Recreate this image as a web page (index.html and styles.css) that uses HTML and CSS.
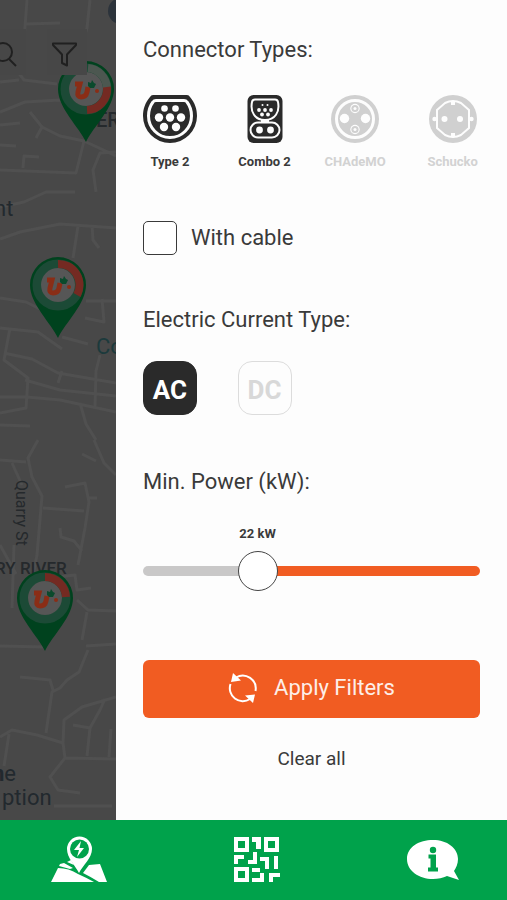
FILE: index.html
```html
<!DOCTYPE html>
<html lang="en">
<head>
<meta charset="utf-8">
<meta name="viewport" content="width=device-width, initial-scale=1">
<title>Charging map filters</title>
<link rel="stylesheet" href="styles.css">
</head>
<body>
<main class="screen">
  <section class="map" aria-label="Map">
    <svg class="map-canvas" viewBox="0 0 116 820" preserveAspectRatio="xMinYMin slice">
      <defs>
        <g id="pin">
          <path class="pin-body" d="M0 53C-7 38-28 19-28 0a28 28 0 0 1 56 0C28 19 7 38 0 53z"/>
          <circle class="pin-ring" r="21"/>
          <circle class="pin-face" r="17"/>
          <path class="pin-u" d="M-11-5H-6L-8 3q-1 5 3 5 5 0 6-5l1-5"/>
          <path class="pin-leaf" d="M2-3 2-7 5-6 6-9 8-6 10-5 8-1 4-1z"/>
          <circle class="pin-dot" cx="11" cy="2" r="2"/>
        </g>
      </defs>
      <g class="roads">
        <path d="M27 0 24 40 18 72 24 80 57 84M25 24 60 23M90 0 87 28 80 52M0 112 25 102 60 100 78 110M0 82 19 80M0 125 20 123M0 145 16 146M30 112 42 127 60 136 84 141 116 156M42 127 36 138M84 141 76 173 0 170M23 168 24 156 39 157M116 152 100 153 93 170 96 192M0 207 24 202 46 192 75 192"/>
        <path d="M0 239 20 232 60 224 116 228M78 226 73 258M92 225 93 240 99 248M0 298 26 302 44 311M0 328 38 332 62 349M10 328 4 360 28 378 26 408 0 413M4 353 32 359 58 373 116 383M62 371 58 383M62 337 88 344M100 355 96 371 95 407M25 380 60 390 116 396M0 397 27 397 60 400 116 412M80 403 86 424 96 440M102 299 104 322 85 318M86 301 116 301M0 425 30 426"/>
        <path d="M38 440 28 458 32 477 42 496 37 555 30 590M0 460 26 462M12 463 22 485M43 508 84 511M116 475 104 463 94 440M82 454 96 461M65 487 85 483 89 502 85 528 78 565M87 498 97 498M60 528 61 537 74 541 82 551M0 545 16 574M14 545 12 608M58 577 75 575 77 590 91 588M77 600 88 610 116 611M87 612 82 640M0 646 45 647"/>
        <path d="M88 650 79 672 67 680 60 688 52 692 46 733M20 677 50 680 53 690M0 737 12 730 37 735 63 743 64 720 82 707 116 697M73 725 90 728 100 710 105 699M90 728 87 756M111 729 109 757M63 743 65 758 116 759M65 758 50 777 58 790 80 793M54 806 112 806M9 734 4 766M86 646 116 644"/>
      </g>
      <circle class="place" cx="121" cy="11" r="13"/>
      <g class="labels">
        <text class="district" x="96" y="127">ER</text>
        <text class="town" x="-6" y="216">nt</text>
        <text class="park" x="96" y="354">Co</text>
        <text class="street" transform="translate(16 480) rotate(90)">Quarry St</text>
        <text class="suburb" x="-5" y="574">RY RIVER</text>
        <text class="town" x="-8" y="781"><tspan class="town-strong">n</tspan>e</text>
        <text class="town" x="2" y="805">ption</text>
      </g>
      <use href="#pin" x="86" y="89"/>
      <path class="pin-arc pin-arc-done" d="M88 68A21 21 0 0 1 107 88"/>
      <path class="pin-arc" d="M107 87A21 21 0 0 1 87 110"/>
      <use href="#pin" x="58" y="285"/>
      <path class="pin-arc" d="M58 264A21 21 0 0 1 77 295"/>
      <use href="#pin" x="45" y="598"/>
      <path class="pin-arc" d="M45 577A21 21 0 0 1 66 597"/>
    </svg>
    <div class="map-tools">
      <button class="tool" type="button" aria-label="Search">
        <svg width="40" height="40" viewBox="0 0 40 40"><circle cx="17" cy="20" r="9"/><path d="M23 27 30 34"/></svg>
      </button>
      <button class="tool" type="button" aria-label="Filter">
        <svg width="40" height="40" viewBox="0 0 40 40"><path d="M6 11.500H29V13L20 22.500V33.500L15 31V22.500L6 13z"/></svg>
      </button>
    </div>
  </section>

  <form class="drawer">
    <section class="group">
      <h2>Connector Types:</h2>
      <div class="options connectors">
        <button class="connector" type="button" aria-pressed="true">
          <svg viewBox="0 0 54 48">
            <path class="ink" d="M10 0H44Q46 0 47 2C52 8 54 14 54 21A27 27 0 0 1 0 21C0 14 2 8 7 2Q8 0 10 0z"/>
            <path class="line" d="M13 5.500H41Q43 5.500 44 7C47 11 48.500 15 48.500 21A21.500 21.500 0 0 1 5.500 21C5.500 15 7 11 10 7Q11 5.500 13 5.500z"/>
            <g class="hole"><circle cx="21.500" cy="13.500" r="3.300"/><circle cx="32.500" cy="13.500" r="3.300"/><circle cx="16" cy="22.500" r="4.200"/><circle cx="27" cy="22.500" r="4.200"/><circle cx="38" cy="22.500" r="4.200"/><circle cx="21" cy="32" r="4.200"/><circle cx="33" cy="32" r="4.200"/></g>
          </svg>
          <span>Type 2</span>
        </button>
        <button class="connector" type="button" aria-pressed="true">
          <svg viewBox="0 0 54 48">
            <rect class="ink" x="9.500" width="35" height="48" rx="6"/>
            <path class="line thin" d="M17 4.500H37Q39.500 4.500 40 7C42 17 37 25 27 25S12 17 14 7Q14.500 4.500 17 4.500z"/>
            <rect class="line thin" x="12.500" y="27.500" width="29" height="15" rx="7.500"/>
            <path class="hole" d="M23 24h8v4h-8z"/>
            <g class="hole"><circle cx="24.500" cy="10" r="1"/><circle cx="29.500" cy="10" r="1"/><circle cx="21" cy="15" r="1.900"/><circle cx="27" cy="15" r="1.900"/><circle cx="33" cy="15" r="1.900"/><circle cx="24" cy="19.500" r="1.900"/><circle cx="30" cy="19.500" r="1.900"/><circle cx="21.500" cy="35" r="3.400"/><circle cx="32.500" cy="35" r="3.400"/></g>
          </svg>
          <span>Combo 2</span>
        </button>
        <button class="connector" type="button" aria-pressed="false">
          <svg viewBox="0 0 54 48">
            <circle class="ink" cx="27" cy="24" r="24"/><circle class="line" cx="27" cy="24" r="18.500"/>
            <g class="hole"><circle cx="16.500" cy="23.500" r="4.700"/><circle cx="37.500" cy="23.500" r="4.700"/><circle cx="27" cy="13.500" r="4.700"/><circle cx="27" cy="34.500" r="4.700"/></g>
            <g class="ink"><circle cx="27" cy="13.500" r="3.600"/><circle cx="27" cy="34.500" r="3.600"/></g>
            <g class="hole"><circle cx="27" cy="13.500" r="1.500"/><circle cx="27" cy="34.500" r="1.500"/></g>
          </svg>
          <span>CHAdeMO</span>
        </button>
        <button class="connector" type="button" aria-pressed="false">
          <svg viewBox="0 0 54 48">
            <circle class="ink" cx="27" cy="24" r="24"/>
            <path class="line thin" d="M11 15 19 8Q27 4 35 8L43 15V33L35 40Q27 44 19 40L11 33z"/>
            <g class="hole"><circle cx="18.500" cy="24" r="3"/><circle cx="34" cy="24" r="3"/><circle cx="8.500" cy="24" r="2.200"/><circle cx="45.500" cy="24" r="2.200"/><path d="M25 6h4v4h-4zM25 38h4v4h-4z"/></g>
          </svg>
          <span>Schucko</span>
        </button>
      </div>
    </section>

    <label class="check"><input type="checkbox">With cable</label>

    <section class="group">
      <h2>Electric Current Type:</h2>
      <div class="options">
        <button class="current" type="button" aria-pressed="true">AC</button>
        <button class="current" type="button" aria-pressed="false">DC</button>
      </div>
    </section>

    <section class="group power">
      <h2><label for="power">Min. Power (kW):</label></h2>
      <output for="power">22 kW</output>
      <input id="power" type="range" min="0" max="69" value="22">
    </section>

    <div class="actions">
      <button class="apply" type="submit">
        <svg width="30" height="30" viewBox="0 0 30 30">
          <path class="arc" d="M8 4.500A13 13 0 0 1 27.500 18M22 26A13 13 0 0 1 2.500 11"/>
          <path class="tip" d="M5 0 13 7.500 3 9zM25 30 17 22.500 27 21.500z"/>
        </svg>
        Apply Filters
      </button>
      <button class="clear" type="reset">Clear all</button>
    </div>
  </form>
</main>

<nav class="tabs" aria-label="Main">
  <a href="#map" aria-label="Map">
    <svg width="56" height="48" viewBox="0 0 56 48">
      <path d="M28 37C24 29 16 22 16 13a12.500 12.500 0 0 1 25 0C41 22 32 29 28 37z"/>
      <circle class="cut" cx="28.500" cy="13" r="9.500"/>
      <path d="M30 5 23 14H28L26 21 33 12H28.500z"/>
      <path d="M7 32Q18 32 27 38Q36 42 43 46H0zM9 28 13 27 22 32 19 33 8 30zM16 26 20 24 23 29zM38 29 49 28 56 46H48Q40 41 32 37z"/>
    </svg>
  </a>
  <a href="#scan" aria-label="Scan code">
    <svg width="46" height="46" viewBox="0 0 46 46">
      <path fill-rule="evenodd" d="M0 0H15V15H0zM4 4V11H11V4zM30 0H45V15H30zM34 4V11H41V4zM0 30H15V45H0zM4 34V41H11V34zM18 0H27V12H22V5H18zM0 18H10V22H4V27H0zM19 15H23V27H14V23H19zM26 20H35V32H31V24H26zM40 19H44V32H40zM18 31H26V35H18zM26 36H30V45H18V41H26zM35 36H46V40H39V45H35z"/>
      <path d="M5.500 5.500H9.500V9.500H5.500zM35.500 5.500H39.500V9.500H35.500zM5.500 35.500H9.500V39.500H5.500z" class="cut"/>
    </svg>
  </a>
  <a href="#info" aria-label="Information">
    <svg width="52" height="42" viewBox="0 0 52 42">
      <path d="M26 1C40 1 51 9 51 20C51 25 49 29 47 32L52 41 40 37C36 39 31 40 26 40C12 40 0 32 0 20S12 1 26 1z"/>
      <path class="cut" d="M21.500 15.500H29V28.500H31V32.500H21V28.500H23.500V19.500H21.500z"/><circle class="cut" cx="26" cy="11" r="3.200"/>
    </svg>
  </a>
</nav>
</body>
</html>
```

FILE: styles.css
```css
* { box-sizing: border-box; }

body {
  margin: 0;
  min-height: 100vh;
  display: grid;
  grid-template-rows: 1fr auto;
  font-family: Roboto, "Liberation Sans", sans-serif;
  color: #3a3a3a;
  background: #fdfdfd;
}

button {
  padding: 0;
  border: 0;
  background: none;
  font: inherit;
  color: inherit;
  cursor: pointer;
}

h2 {
  margin: 0;
  font-size: 22px;
  line-height: 28px;
  font-weight: 400;
}

.screen {
  display: grid;
  grid-template-columns: 116fr 391fr;
}

/* Dimmed map behind the drawer */
.map {
  position: relative;
  overflow: hidden;
  background: #484848;
}
.map-canvas {
  position: absolute;
  inset: 0;
  width: 100%;
  height: 100%;
}
.roads {
  fill: none;
  stroke: #505050;
  stroke-width: 3;
  stroke-linejoin: round;
}
.place { fill: #2c333b; }
.labels { fill: #25292c; }
.district { font-size: 20px; font-weight: 500; }
.suburb { font-size: 17px; font-weight: 500; }
.street { font-size: 16px; }
.town { font-size: 22px; fill: #22292e; }
.town-strong { font-weight: 700; }
.park { font-size: 22px; fill: #1c3a3c; }
.pin-body { fill: #00421e; }
.pin-ring { fill: none; stroke: #1c4a36; stroke-width: 9; }
.pin-face { fill: #565656; }
.pin-u { fill: none; stroke: #8a2d16; stroke-width: 5; }
.pin-leaf { fill: #0a4a2c; }
.pin-dot { fill: #8a2d16; }
.pin-arc { fill: none; stroke: #742a22; stroke-width: 8; }
.pin-arc-done { stroke: #4c5750; }

.map-tools {
  position: absolute;
  top: 29px;
  left: -14px;
  display: flex;
  gap: 21px;
}
.tool {
  height: 46px;
  background: #474747;
}
.tool svg {
  display: block;
  fill: none;
  stroke: #202020;
  stroke-width: 2;
  stroke-linejoin: round;
}

/* Filter drawer */
.drawer {
  padding: 36px 27px 44px;
  display: flex;
  flex-direction: column;
}
.options {
  display: grid;
  grid-template-columns: 94fr 90fr 97fr 54fr;
  margin-top: 27px;
}
.connectors { margin-top: 31px; }
.connector {
  width: 54px;
  display: flex;
  flex-direction: column;
  align-items: center;
  gap: 11px;
  font-size: 13px;
  line-height: 16px;
  font-weight: 700;
  white-space: nowrap;
}
.connector svg {
  width: 54px;
  height: 48px;
}
.connector .ink { fill: #2a2a2a; }
.connector .hole { fill: #fdfdfd; }
.connector .line { fill: none; stroke: #fdfdfd; stroke-width: 3; }
.connector .thin { stroke-width: 2; }
.connector[aria-pressed="false"] { color: #d2d2d2; }
.connector[aria-pressed="false"] .ink { fill: #d0d0d0; }

.check {
  margin: 51px 0;
  display: flex;
  align-items: center;
  gap: 14px;
  font-size: 22px;
  line-height: 28px;
}
.check input {
  appearance: none;
  margin: 0;
  width: 34px;
  height: 34px;
  border: 1px solid #3a3a3a;
  border-radius: 5px;
  background: #fff;
}
.check input:checked { background: #2a2a2a; }

.current {
  width: 54px;
  height: 54px;
  padding-top: 4px;
  border: 1px solid #dcdcdc;
  border-radius: 14px;
  font-size: 26px;
  line-height: 30px;
  font-weight: 700;
  color: #d8d8d8;
}
.current[aria-pressed="true"] {
  border-color: #2a2a2a;
  background: #2a2a2a;
  color: #fff;
}

.power {
  margin-top: 53px;
  display: flex;
  flex-direction: column;
}
.power output {
  width: 68%;
  margin-top: 30px;
  font-size: 13px;
  line-height: 16px;
  font-weight: 700;
  text-align: center;
}
.power input {
  appearance: none;
  width: 100%;
  height: 40px;
  margin: 9px 0 0;
  background: none;
}
.power input::-webkit-slider-runnable-track {
  height: 10px;
  border-radius: 5px;
  background: linear-gradient(to right, #c9c8c8 34%, #f15c22 34%);
}
.power input::-webkit-slider-thumb {
  appearance: none;
  width: 40px;
  height: 40px;
  margin-top: -15px;
  border: 1px solid #444;
  border-radius: 50%;
  background: #fff;
}

.actions {
  margin-top: 69px;
  display: flex;
  flex-direction: column;
  align-items: center;
  gap: 27px;
}
.apply {
  width: 100%;
  height: 58px;
  padding-bottom: 2px;
  display: flex;
  justify-content: center;
  align-items: center;
  gap: 16px;
  border-radius: 6px;
  background: #f15c22;
  color: #fdeee8;
  font-size: 22px;
  line-height: 28px;
}
.apply .arc { fill: none; stroke: #fff; stroke-width: 2; }
.apply .tip { fill: #fff; }
.clear {
  font-size: 19px;
  line-height: 28px;
}

/* Bottom tab bar */
.tabs {
  height: 80px;
  padding: 0 48px 0 51px;
  display: flex;
  justify-content: space-between;
  align-items: center;
  background: #00a24b;
}
.tabs svg {
  display: block;
  fill: #fff;
}
.tabs .cut { fill: #00a24b; }
```
